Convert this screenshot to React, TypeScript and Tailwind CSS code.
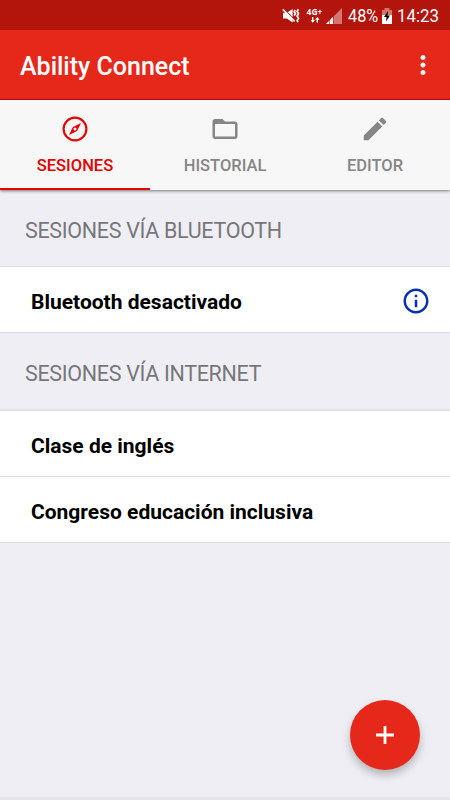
import type { ReactNode } from "react";
import { MdEdit, MdFolderOpen, MdInfoOutline, MdMoreVert } from "react-icons/md";

function StatusBar() {
  return (
    <div className="flex h-[30px] items-center justify-end bg-[#b3140c] pt-px pr-[11px] text-white">
      <svg width="18" height="16" viewBox="0 0 18 16" className="mr-[6px]">
        <path d="M1 4.8h3.8L10.6 1v13.4L4.8 10.4H1z" fill="#fff" />
        <path d="M1.5 0.6L13.5 12.6" stroke="#b3140c" strokeWidth="1.2" />
        <path d="M0.8 1.4L12.6 13.4" stroke="#fff" strokeWidth="1.6" />
        <path
          d="M13.2 2l-1 1.8 1.2 1.8-1.2 2M16.4 1.2l-1.3 2.2 1.4 2.3-1.4 2.3 1.4 2.3-1.4 2.2.9 1.6"
          stroke="#fff"
          strokeWidth="1.7"
          fill="none"
        />
      </svg>
      <div className="mr-[3px] flex w-[17px] flex-col items-center">
        <span className="font-['Open_Sans'] text-[8.5px] leading-[8px] font-bold whitespace-nowrap">
          4G+
        </span>
        <svg width="10" height="6" viewBox="0 0 10 6" className="mt-px" fill="#fff">
          <path d="M2 0h1.4v3H5L2.7 5.8.4 3H2zM6.6 5.6H8V2.8h1.6L7.3 0 5 2.8h1.6z" />
        </svg>
      </div>
      <svg width="16" height="16" viewBox="0 0 16 16" className="mr-[6px]">
        <path d="M0 16L16 0v16z" fill="#d5756f" />
        <path d="M0 16l7-7v7z" fill="#fff" />
        <path d="M3.5 11v5M7.4 8v8" stroke="#b3140c" strokeWidth="0.6" />
      </svg>
      <span className="mr-[4px] w-[30px] text-[18.5px] leading-[30px] whitespace-nowrap">
        <span className="inline-block origin-left scale-x-[0.88]">48%</span>
      </span>
      <svg width="10" height="16" viewBox="0 0 10 16" className="mr-[5px]">
        <path d="M2.5 0h5v2H10v5H0V2h2.5z" fill="#d5756f" />
        <path d="M0 7h10v9H0z" fill="#fff" />
        <path d="M6 3L2 9h2.5L4 13.5 8 7.5H5.5z" fill="#000" />
      </svg>
      <span className="w-[42px] text-[18.5px] leading-[30px] whitespace-nowrap">
        <span className="inline-block origin-left scale-x-[0.91]">14:23</span>
      </span>
    </div>
  );
}

function Compass() {
  return (
    <svg width="30" height="30" viewBox="0 0 30 30">
      <circle cx="15" cy="15" r="11.4" stroke="currentColor" strokeWidth="2.1" fill="none" />
      <path
        fillRule="evenodd"
        fill="currentColor"
        d="M21 9l-3.9 8.1L9 21l3.9-8.1zM15 13.5a1.5 1.5 0 1 0 0 3 1.5 1.5 0 0 0 0-3z"
      />
    </svg>
  );
}

function Tab({ icon, label, active }: { icon: ReactNode; label: string; active?: boolean }) {
  return (
    <button
      className={
        active
          ? "flex flex-1 flex-col items-center border-b-2 border-[#e60000] pt-[14px] text-[#e60000]"
          : "flex flex-1 flex-col items-center border-b-2 border-transparent pt-[14px] text-[#868686]"
      }
    >
      {icon}
      <span className="mt-[12px] text-[16.5px] leading-[20px] font-medium">{label}</span>
    </button>
  );
}

function Session({ name, info }: { name: string; info?: boolean }) {
  return (
    <div className="flex h-[66px] items-center justify-between border-b border-[#dedee0] bg-white pt-[3px] pr-[19px] pl-[31px]">
      <span className="pt-[3px] text-[21px] font-bold text-black">{name}</span>
      {info && <MdInfoOutline size={30} className="text-[#0a2fb5]" />}
    </div>
  );
}

export default function App() {
  return (
    <div className="relative flex h-[800px] w-[450px] flex-col overflow-hidden bg-[#efeef4] font-['Roboto',sans-serif]">
      <StatusBar />
      <header className="flex h-[70px] items-center justify-between border-b border-[#b90b04] bg-[#e6281a] pr-[12.5px] pl-[20px] text-white">
        <h1 className="pt-[4px] text-[25px] font-medium">Ability Connect</h1>
        <MdMoreVert size={30} />
      </header>
      <nav className="z-10 flex h-[90px] shrink-0 bg-[#f7f7f7] shadow-[0_1px_3px_rgba(0,0,0,0.5)]">
        <Tab icon={<Compass />} label="SESIONES" active />
        <Tab icon={<MdFolderOpen size={30} />} label="HISTORIAL" />
        <Tab icon={<MdEdit size={30} />} label="EDITOR" />
      </nav>
      <h2 className="flex h-[77px] items-center border-b border-[#dedee0] pt-[6px] pl-[25px] text-[21.5px] tracking-[-0.32px] text-[#77777a]">
        SESIONES VÍA BLUETOOTH
      </h2>
      <Session name="Bluetooth desactivado" info />
      <h2 className="flex h-[78px] items-center border-b-2 border-[#e2e2e6] pt-[7px] pl-[25px] text-[21.5px] tracking-[-0.32px] text-[#77777a]">
        SESIONES VÍA INTERNET
      </h2>
      <Session name="Clase de inglés" />
      <Session name="Congreso educación inclusiva" />
      <div className="mt-auto h-[3px] bg-[#e6e6ea]" />
      <button className="absolute right-[30px] bottom-[30px] flex size-[70px] items-center justify-center rounded-full bg-[#e6281a] shadow-[0_5px_9px_rgba(0,0,0,0.25)]">
        <svg width="18" height="18" viewBox="0 0 18 18" stroke="#fff" strokeWidth="2.8">
          <path d="M9 0v18M0 9h18" />
        </svg>
      </button>
    </div>
  );
}
